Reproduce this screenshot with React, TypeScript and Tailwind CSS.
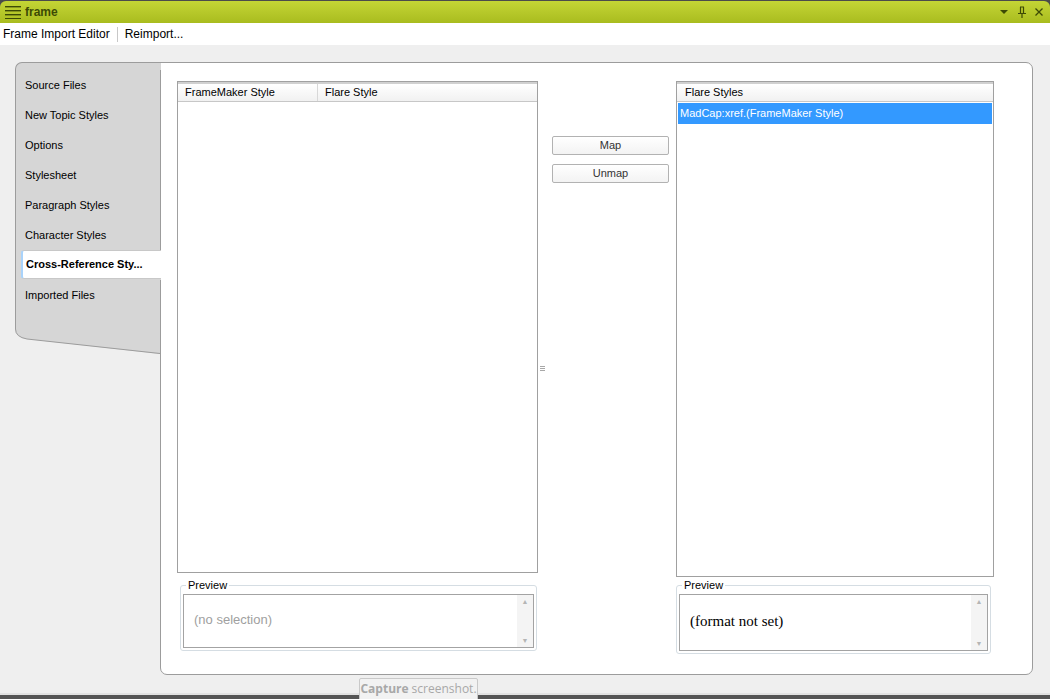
import React from "react";

const font = { fontFamily: '"Liberation Sans", Arial, sans-serif' };

function TabStrip() {
  const tabs = [
    "Source Files",
    "New Topic Styles",
    "Options",
    "Stylesheet",
    "Paragraph Styles",
    "Character Styles",
    "Cross-Reference Sty...",
    "Imported Files",
  ];
  return (
    <div className="w-[146px] flex flex-col -mr-px relative z-10">
      <div className="bg-[#d6d6d6] border-l border-t border-[#9c9c9c] rounded-tl-[7px] pt-[7px] h-[264px] border-r-0">
        {tabs.map((t, i) =>
          i === 6 ? (
            <div
              key={t}
              className="h-[29px] mb-px ml-[5px] flex items-center bg-white rounded-l-[3px] border-l-[2px] border-[#a9d3fb] border-y border-y-[#c8c8c8] pl-[3px] text-[11px] font-bold text-black"
            >
              {t}
            </div>
          ) : (
            <div key={t} className="h-[30px] flex items-center pl-[9px] text-[11px] text-black border-r border-[#9c9c9c]">
              {t}
            </div>
          )
        )}
        <div className="h-[30px] border-r border-[#9c9c9c]" />
      </div>
      <svg width="146" height="30" className="block -mt-px">
        <path d="M0 0 L0 4 Q0 12 12 14 L145 29 L145 0 Z" fill="#d6d6d6" />
        <path d="M0.5 0 L0.5 4 Q0.5 12 12 14 L145 28.5" fill="none" stroke="#9c9c9c" strokeWidth="1" />
        <line x1="145.5" y1="0" x2="145.5" y2="30" stroke="#9c9c9c" />
      </svg>
    </div>
  );
}

function ScrollBox({ children }: { children: React.ReactNode }) {
  return (
    <div className="flex h-full border border-[#a3a3a3] bg-white">
      <div className="flex-1 flex items-center pb-[3px]">{children}</div>
      <div className="w-[16px] bg-[#f4f4f4] flex flex-col justify-between items-center py-[3px] text-[#b5b5b5] text-[7px] leading-none">
        <span>▲</span>
        <span>▼</span>
      </div>
    </div>
  );
}

function GroupBox({ children, h }: { children: React.ReactNode; h: string }) {
  return (
    <div className={`relative border border-[#d5dde3] rounded-[3px] px-[2px] pt-[8px] pb-[2px] ${h}`}>
      <span className="absolute -top-[8px] left-[5px] bg-white px-[2px] text-[11px] leading-[14px] text-black">
        Preview
      </span>
      {children}
    </div>
  );
}

function HeaderCell({ children, w, last }: { children: React.ReactNode; w?: string; last?: boolean }) {
  return (
    <div
      className={`h-full flex items-center pl-[7px] text-[11px] text-black ${w ?? "flex-1"} ${
        last ? "" : "border-r border-[#d8d8d8]"
      }`}
    >
      {children}
    </div>
  );
}

export default function App() {
  return (
    <div className="w-[1050px] h-[699px] bg-[#4b4b4b] flex flex-col overflow-hidden relative" style={font}>
      {/* Title bar */}
      <div className="h-[22px] rounded-t-[6px] bg-gradient-to-b from-[#c4d535] to-[#a9bc1e] flex items-center pl-[5px] pr-[6px] mt-px">
        <svg width="16" height="14" viewBox="0 0 16 14" className="mr-[4px]">
          <rect x="0" y="1" width="16" height="1.4" fill="#3d4a05" />
          <rect x="0" y="5" width="16" height="1.4" fill="#3d4a05" />
          <rect x="0" y="9" width="16" height="1.4" fill="#3d4a05" />
          <rect x="0" y="13" width="16" height="1" fill="#3d4a05" />
        </svg>
        <span className="text-[12px] font-bold text-[#3d4a05]">frame</span>
        <div className="flex-1" />
        <svg width="10" height="10" viewBox="0 0 10 10" className="mr-[8px]">
          <path d="M1 3 L9 3 L5 7 Z" fill="#3d4a05" />
        </svg>
        <svg width="10" height="12" viewBox="0 0 10 12" className="mr-[7px]">
          <path d="M3 1 L7 1 M3.5 1 L3.5 7 M6.5 1 L6.5 7 M1 7.5 L9 7.5 M5 8 L5 12" stroke="#3d4a05" strokeWidth="1.2" fill="none" />
        </svg>
        <svg width="10" height="10" viewBox="0 0 10 10">
          <path d="M1.5 1.5 L8.5 8.5 M8.5 1.5 L1.5 8.5" stroke="#3d4a05" strokeWidth="1.3" />
        </svg>
      </div>
      {/* Toolbar */}
      <div className="h-[22px] bg-white flex items-center text-[12px] text-black">
        <span className="pl-[3px]">Frame Import Editor</span>
        <span className="mx-[7px] w-px h-[15px] bg-[#c8c8c8]" />
        <span>Reimport...</span>
      </div>
      {/* Main */}
      <div className="flex-1 bg-[#efefef] flex pl-[15px] pt-[17px] border-b-2 border-[#e2e2e2]">
        <TabStrip />
        <div className="w-[873px] h-[613px] bg-white border border-[#9c9c9c] rounded-tr-[7px] rounded-b-[7px] flex pl-[16px] pt-[18px]">
          {/* Left column */}
          <div className="w-[361px] flex flex-col">
            <div className="h-[492px] border border-[#a0a0a0] bg-white flex flex-col">
              <div className="h-[20px] border-b border-[#c7c7c7] border-t-2 border-t-[#d0d0d0] bg-gradient-to-b from-white to-[#f1f1f1] flex">
                <HeaderCell w="w-[140px]">FrameMaker Style</HeaderCell>
                <HeaderCell last>Flare Style</HeaderCell>
              </div>
            </div>
            <div className="pl-[3px] pr-px mt-[12px]">
              <GroupBox h="h-[66px]">
                <ScrollBox>
                  <span className="pl-[10px] text-[13px] text-[#a0a0a0]" style={{ fontFamily: '"Liberation Sans", Arial, sans-serif' }}>
                    (no selection)
                  </span>
                </ScrollBox>
              </GroupBox>
            </div>
          </div>
          {/* Middle */}
          <div className="w-[138px] flex">
            <div className="w-[9px] flex justify-center pt-[285px]">
              <svg width="5" height="5" viewBox="0 0 5 5">
                <path d="M0 0.5 H5 M0 2.5 H5 M0 4.5 H5" stroke="#a8a8a8" strokeWidth="1" />
              </svg>
            </div>
            <div className="flex flex-col pl-[5px] pt-[55px] gap-[9px]">
              <button className="w-[117px] h-[19px] border border-[#b2b2b2] rounded-[2px] bg-gradient-to-b from-white to-[#f3f3f3] text-[11px] text-[#333]">
                Map
              </button>
              <button className="w-[117px] h-[19px] border border-[#b2b2b2] rounded-[2px] bg-gradient-to-b from-white to-[#f3f3f3] text-[11px] text-[#333]">
                Unmap
              </button>
            </div>
          </div>
          {/* Right column */}
          <div className="w-[318px] flex flex-col">
            <div className="h-[496px] border border-[#a0a0a0] bg-white flex flex-col">
              <div className="h-[20px] border-b border-[#c7c7c7] border-t-2 border-t-[#d0d0d0] bg-gradient-to-b from-white to-[#f1f1f1] flex">
                <HeaderCell last>
                  <span className="pl-px">Flare Styles</span>
                </HeaderCell>
              </div>
              <div className="mt-px mx-px h-[21px] bg-[#3399ff] text-white text-[11px] flex items-center pl-[2px]">
                MadCap:xref.(FrameMaker Style)
              </div>
            </div>
            <div className="pr-[3px] mt-[8px]">
              <GroupBox h="h-[69px]">
                <ScrollBox>
                  <span className="pl-[10px] text-[15px] text-black" style={{ fontFamily: '"Liberation Serif", "Times New Roman", serif' }}>
                    (format not set)
                  </span>
                </ScrollBox>
              </GroupBox>
            </div>
          </div>
        </div>
      </div>
      <div className="h-[4px] bg-[#555555]" />
      {/* Tooltip */}
      <div className="absolute left-[359px] top-[678px] w-[119px] h-[22px] bg-[#f2f2f2] border border-[#c9c9c9] rounded-t-[2px] flex items-center justify-center text-[12px] text-[#a8a8a8]" style={{ fontFamily: '"Open Sans", "Liberation Sans", sans-serif' }}>
        <span className="font-bold">Capture</span>
        <span className="ml-[3px]">screenshot.</span>
      </div>
    </div>
  );
}
